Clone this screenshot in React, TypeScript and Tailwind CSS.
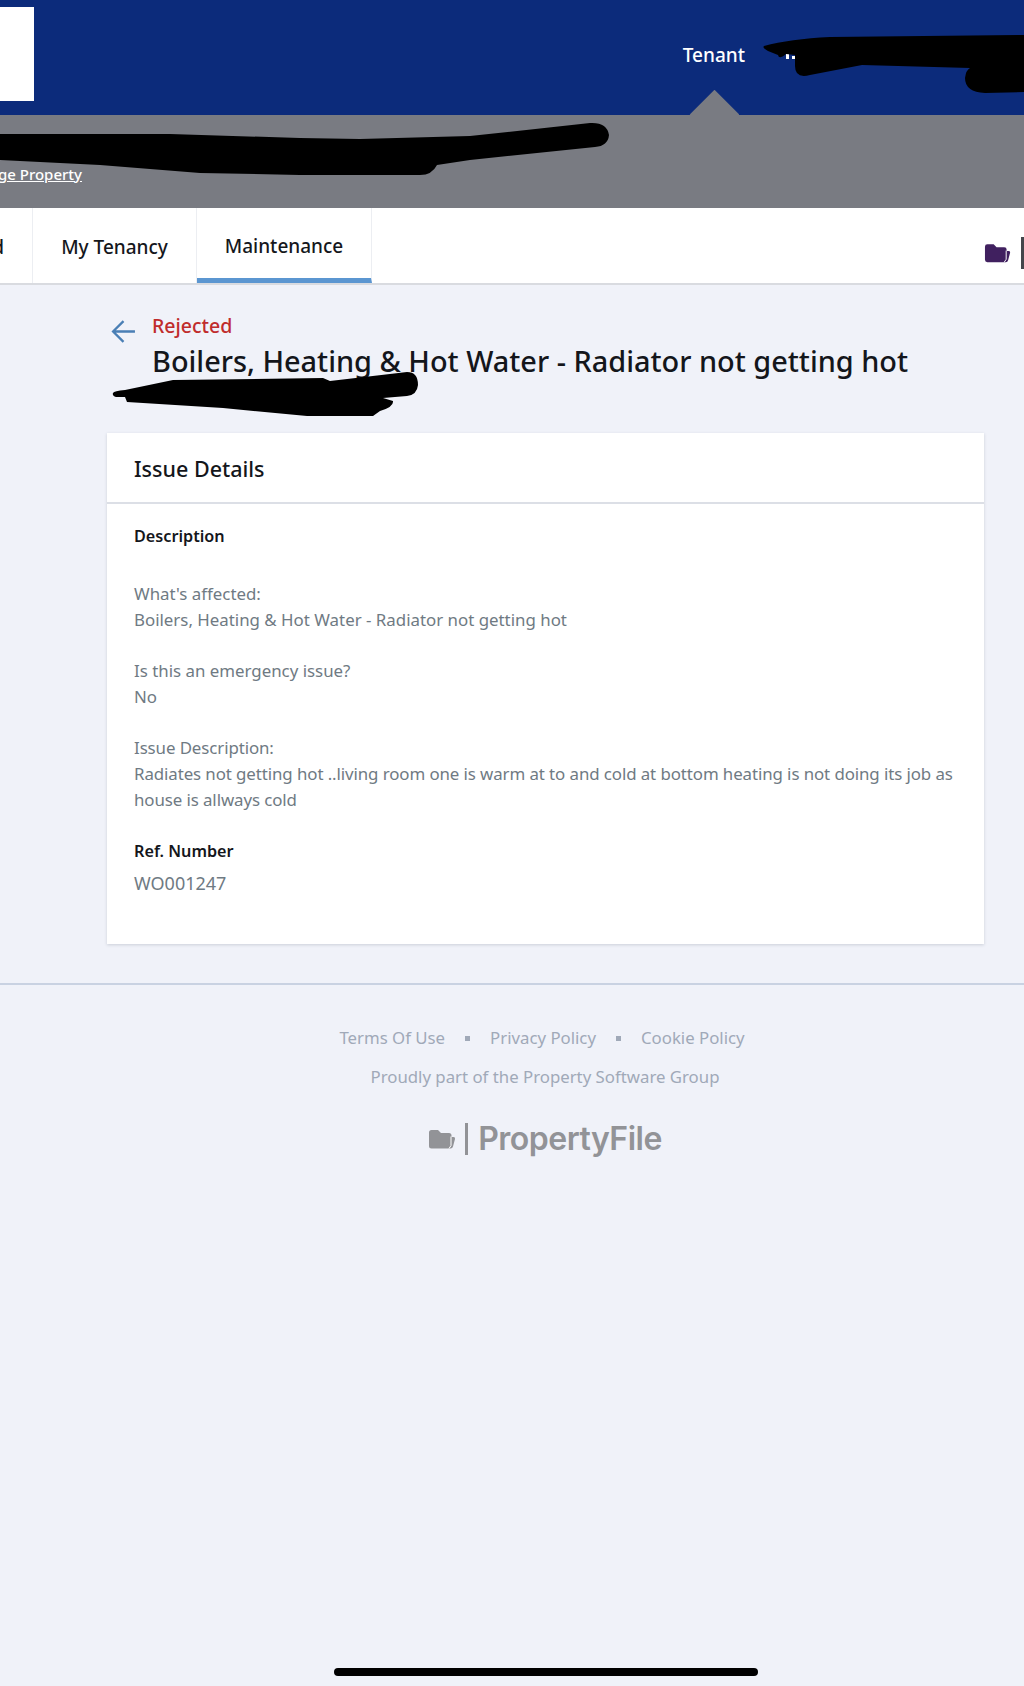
const font = { fontFamily: '"Noto Sans", sans-serif' };

function Folder({ className }: { className: string }) {
  return (
    <svg viewBox="0 0 28 20" className={className} aria-hidden="true">
      <path d="M1 3.500Q1 1 3.500 1H10L13 4H21Q23.500 4 23.500 6.500V8H25.500Q27.500 8 27 10L25 17.500Q24.500 19.500 22.500 19.500H3.500Q1 19.500 1 17Z" fill="currentColor" />
      <path d="M23 7.500V16.500L21 19.500" stroke="#fff" strokeWidth="1" fill="none" />
    </svg>
  );
}

function Scribbles() {
  return (
    <svg viewBox="0 0 1024 1686" className="absolute inset-0 w-[1024px] h-[1686px] pointer-events-none" aria-hidden="true">
      <path d="M0 134L170 134L300 138L360 139L470 136L590 123Q607 122 609 135Q608 146 595 147L470 160L437 165Q432 175 420 175L300 175L200 173L100 165L0 160Z" fill="#000" />
      <path d="M786 52h3v7h-3zM792 56h3v3h-3z" fill="#fff" />
      <path d="M764 46Q790 39 830 37L1024 35V92L985 93Q965 92 965 78Q966 70 970 68L862 65L810 75Q795 79 795 66L795 55L786 54Q779 60 778 55L768 51Q762 48 764 46Z" fill="#000" />
      <path d="M113 393Q114 391 125 390L173 380L323 378L330 381L407 372Q418 372 418 385Q417 395 407 396L383 398L393 401Q394 407 380 411L373 416L307 416L223 408L127 402L125 397L116 397Q112 396 113 393Z" fill="#000" />
    </svg>
  );
}

export default function App() {
  return (
    <div className="relative w-[1024px] h-[1686px] overflow-hidden bg-[#f0f2f9]" style={font}>
      <header className="h-[115px] bg-[#0c2b7b] flex items-center justify-between">
        <div className="w-[34px] h-[94px] bg-white -mt-[7px]" />
        <div className="flex items-center -mt-[5px]">
          <span className="text-[19px] leading-6 font-medium text-white mr-[279px]">Tenant</span>
        </div>
      </header>
      <div className="relative h-[93px] bg-[#797b82] flex items-end">
        <div className="absolute -top-[25px] left-[689px] w-[50px] h-[25px] overflow-hidden">
          <div className="w-[35px] h-[35px] bg-[#797b82] rotate-45 mt-[7px] ml-[7.500px]" />
        </div>
        <a className="text-[15px] leading-5 font-medium text-white underline mb-[24px] -ml-[39px] whitespace-nowrap">Change Property</a>
      </div>
      <nav className="h-[77px] bg-white border-b-2 border-[#d9dbe0] flex items-stretch">
        <div className="w-[33px] overflow-hidden border-r border-[#eceef2] flex items-center justify-end pr-[28px] pt-[4px]">
          <span className="text-[19px] font-medium text-[#15171c]">d</span>
        </div>
        <div className="w-[164px] border-r border-[#eceef2] flex items-center justify-center pt-[4px] text-[19px] font-medium text-[#15171c]">My Tenancy</div>
        <div className="w-[175px] border-r border-[#eceef2] border-b-[5px] border-b-[#5b96d1] flex items-center justify-center pt-[7px] text-[19px] font-medium text-[#15171c]">Maintenance</div>
        <div className="flex-1 flex items-center justify-end gap-[10px]">
          <Folder className="w-[27px] h-[20px] text-[#40205f] mt-[14px]" />
          <div className="w-[3px] h-[32px] bg-[#44464b] mt-[14px]" />
        </div>
      </nav>
      <main className="pl-[107px] pr-[40px]">
        <div className="flex h-[148px] pt-[29px]">
          <svg viewBox="0 0 24 24" className="w-[25px] h-[25px] mt-[5px] ml-[4px] text-[#4a7fb5]" fill="none" stroke="currentColor" strokeWidth="2.200">
            <path d="M23 12H2M12 2L2 12L12 22" />
          </svg>
          <div className="ml-[16px]">
            <div className="text-[19.500px] leading-6 font-medium text-[#c02c2c]">Rejected</div>
            <h1 className="text-[28.900px] leading-[44px] mt-[1px] font-medium text-[#14161b] whitespace-nowrap">Boilers, Heating &amp; Hot Water - Radiator not getting hot</h1>
          </div>
        </div>
        <section className="bg-white shadow-[0_1px_3px_rgba(60,70,90,0.2)]">
          <div className="h-[71px] px-[27px] pt-[4px] flex items-center border-b-2 border-[#dcdfe6] text-[21.500px] font-medium text-[#14161b]">Issue Details</div>
          <div className="pl-[27px] pr-[20px] pt-[19px] pb-[48px] text-[16.870px] leading-[26px] text-[#6f7a83]">
            <h2 className="text-[16.200px] font-semibold text-[#14161b]">Description</h2>
            <p className="mt-[32px]">What's affected:<br />Boilers, Heating &amp; Hot Water - Radiator not getting hot</p>
            <p className="mt-[25px]">Is this an emergency issue?<br />No</p>
            <p className="mt-[25px] tracking-[-0.09px]">Issue Description:<br />Radiates not getting hot ..living room one is warm at to and cold at bottom heating is not doing its job as house is allways cold</p>
            <h2 className="text-[16.200px] font-semibold text-[#14161b] mt-[25px]">Ref. Number</h2>
            <p className="mt-[6px] text-[18px]">WO001247</p>
          </div>
        </section>
      </main>
      <footer className="mt-[39px] border-t-2 border-[#c9d2e2] flex flex-col items-center pl-[66px] text-[16.800px] text-[#a0a9b8]">
        <div className="flex items-center gap-[20px] mt-[41px] mr-[6px] leading-6">
          <span>Terms Of Use</span>
          <span className="w-[5px] h-[5px] bg-[#a0a9b8]" />
          <span>Privacy Policy</span>
          <span className="w-[5px] h-[5px] bg-[#a0a9b8]" />
          <span>Cookie Policy</span>
        </div>
        <p className="mt-[15px] leading-6">Proudly part of the Property Software Group</p>
        <div className="flex items-center mt-[32px] text-[#929397]">
          <Folder className="w-[28px] h-[20px]" />
          <div className="w-[3px] h-[32px] bg-[#929397] ml-[9px] mr-[10px]" />
          <span className="text-[32px] leading-9 font-semibold tracking-[-0.5px]" style={{ fontFamily: 'Inter, sans-serif' }}>PropertyFile</span>
        </div>
      </footer>
      <div className="absolute left-[334px] bottom-[10px] w-[424px] h-[8px] rounded-full bg-black" />
      <Scribbles />
    </div>
  );
}
